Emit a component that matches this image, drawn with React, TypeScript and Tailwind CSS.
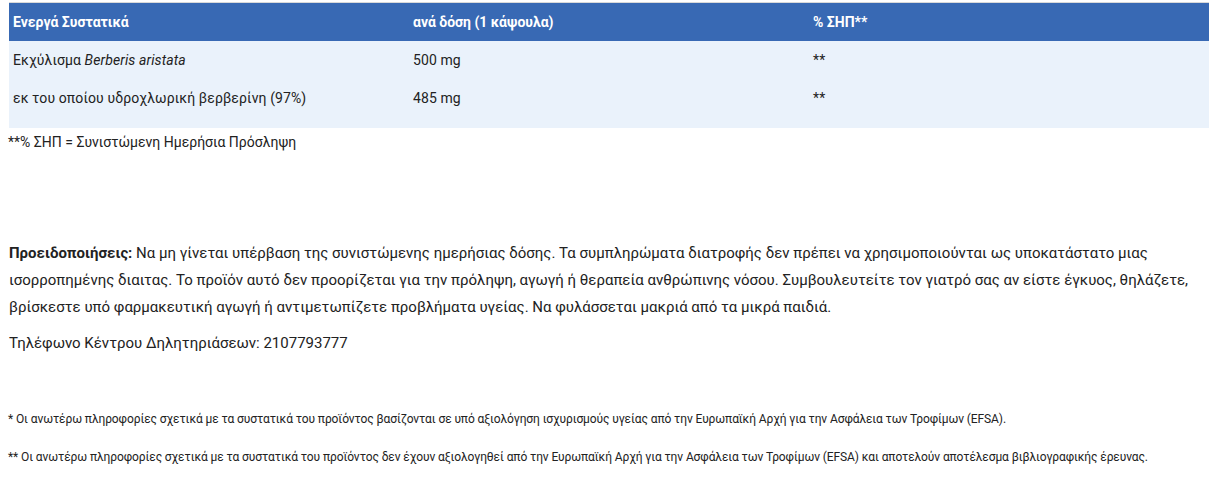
import React from "react";

const cond = "font-['Roboto','Noto_Sans',sans-serif]";

export default function App() {
  return (
    <div className="w-[1224px] h-[480px] bg-white text-[#222] font-['Roboto','Noto_Sans',sans-serif] overflow-hidden">
      <div className="pt-[2px] pl-[9px] w-[1209px]">
        <div className="border-t border-[#d9d9d9]">
          <div className={`grid grid-cols-[400px_400px_400px] bg-[#3869b4] text-white font-bold text-[14px] h-[38px] items-center ${cond}`}>
            <div className="pl-[4px]">Ενεργά Συστατικά</div>
            <div className="pl-[4px]">ανά δόση (1 κάψουλα)</div>
            <div className="pl-[4px]">% ΣΗΠ**</div>
          </div>
          <div className={`bg-[#eaf2fb] text-[14px] pb-[11px] tracking-[0.1px] ${cond}`}>
            <div className="grid grid-cols-[400px_400px_400px] h-[38px] items-center">
              <div className="pl-[4px]">Εκχύλισμα <i>Berberis aristata</i></div>
              <div className="pl-[4px]">500 mg</div>
              <div className="pl-[4px]">**</div>
            </div>
            <div className="grid grid-cols-[400px_400px_400px] h-[38px] items-center">
              <div className="pl-[4px]">εκ του οποίου υδροχλωρική βερβερίνη (97%)</div>
              <div className="pl-[4px]">485 mg</div>
              <div className="pl-[4px]">**</div>
            </div>
          </div>
        </div>
        <div className={`text-[14px] mt-[4px] -ml-[1px] ${cond}`}>**% ΣΗΠ = Συνιστώμενη Ημερήσια Πρόσληψη</div>
      </div>

      <div className="pl-[9px] pr-[10px] mt-[87px] text-[15px] leading-[27px] text-[#222]">
        <p>
          <b>Προειδοποιήσεις:</b> Να μη γίνεται υπέρβαση της συνιστώμενης ημερήσιας δόσης. Τα συμπληρώματα διατροφής δεν πρέπει να χρησιμοποιούνται ως υποκατάστατο μιας ισορροπημένης διαιτας. Το προϊόν αυτό δεν προορίζεται για την πρόληψη, αγωγή ή θεραπεία ανθρώπινης νόσου. Συμβουλευτείτε τον γιατρό σας αν είστε έγκυος, θηλάζετε, βρίσκεστε υπό φαρμακευτική αγωγή ή αντιμετωπίζετε προβλήματα υγείας. Να φυλάσσεται μακριά από τα μικρά παιδιά.
        </p>
        <p className="mt-[9px]">Τηλέφωνο Κέντρου Δηλητηριάσεων: 2107793777</p>
      </div>

      <div className={`pl-[8px] mt-[54px] text-[12px] leading-[16px] tracking-[-0.1px] ${cond}`}>
        <p>* Οι ανωτέρω πληροφορίες σχετικά με τα συστατικά του προϊόντος βασίζονται σε υπό αξιολόγηση ισχυρισμούς υγείας από την Ευρωπαϊκή Αρχή για την Ασφάλεια των Τροφίμων (EFSA).</p>
        <p className="mt-[22px]">** Οι ανωτέρω πληροφορίες σχετικά με τα συστατικά του προϊόντος δεν έχουν αξιολογηθεί από την Ευρωπαϊκή Αρχή για την Ασφάλεια των Τροφίμων (EFSA) και αποτελούν αποτέλεσμα βιβλιογραφικής έρευνας.</p>
      </div>
    </div>
  );
}
